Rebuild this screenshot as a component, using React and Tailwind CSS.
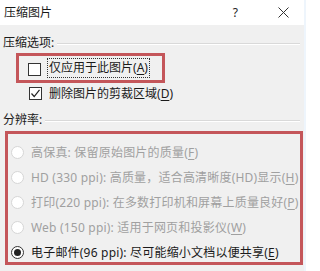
import React from 'react'

const FONT = { fontFamily: '"Noto Sans", "Noto Sans CJK SC", sans-serif' }

function Mn({ k }) {
  // mnemonic letter, underlined like a Windows dialog
  return (
    <span>
      (<span className="underline underline-offset-2">{k}</span>)
    </span>
  )
}

function SectionHeader({ label }) {
  return (
    <div className="flex items-center h-[13px] pl-[3px] pr-[4px] gap-[3px]">
      <span className="text-[12px] leading-none text-[#1a1a1a] whitespace-nowrap">{label}</span>
      <div className="flex-1 h-[2px] border-t border-[#d9d9d9] border-b border-b-white mt-[3px]" />
    </div>
  )
}

function Radio({ checked, disabled }) {
  return (
    <span
      className={`flex items-center justify-center w-[13px] h-[13px] rounded-full border bg-white shrink-0 ${
        disabled ? 'border-[#d6d6d6]' : 'border-[#333]'
      }`}
    >
      {checked && <span className="w-[7px] h-[7px] rounded-full bg-[#222]" />}
    </span>
  )
}

const options = [
  { text: '高保真: 保留原始图片的质量', k: 'F', disabled: true },
  { text: 'HD (330 ppi): 高质量，适合高清晰度(HD)显示', k: 'H', disabled: true },
  { text: '打印(220 ppi): 在多数打印机和屏幕上质量良好', k: 'P', disabled: true },
  { text: 'Web (150 ppi): 适用于网页和投影仪', k: 'W', disabled: true },
  { text: '电子邮件(96 ppi): 尽可能缩小文档以便共享', k: 'E', checked: true },
]

export default function App() {
  return (
    <div className="w-[306px] h-[271px] bg-[#f0f0f0] overflow-hidden border-r-2 border-[#eef5fc]" style={FONT}>
      {/* title bar */}
      <div className="h-[25px] bg-white flex items-center pl-[4px]">
        <span className="text-[12px] text-[#1a1a1a] leading-none">压缩图片</span>
        <span className="ml-auto mr-[40px] text-[12px] leading-none text-[#222]">?</span>
        <svg width="11" height="11" viewBox="0 0 11 11" className="mr-[15px]">
          <path d="M0.5 0.5 L10.5 10.5 M10.5 0.5 L0.5 10.5" stroke="#333" strokeWidth="1" />
        </svg>
      </div>

      <div className="pt-[11px]">
        <SectionHeader label="压缩选项:" />

        <div className="ml-[16px] mt-[4px] w-[149px] h-[30px] border-[3px] border-[#c4565a] flex items-center pl-[9px]">
          <span className="w-[13px] h-[13px] border border-[#333] bg-white shrink-0 mt-[2px]" />
          <span className="ml-[6px] h-[20px] flex items-center px-[1px] border border-dotted border-[#333] text-[12px] text-[#1a1a1a] whitespace-nowrap">
            仅应用于此图片<Mn k="A" />
          </span>
        </div>

        <div className="mt-[4px] h-[13px] flex items-center pl-[29px]">
          <span className="w-[13px] h-[13px] border border-[#333] bg-white shrink-0 flex items-center justify-center">
            <svg width="11" height="11" viewBox="0 0 11 11">
              <path d="M1.5 5.5 L4.2 8.5 L9.5 1.8" fill="none" stroke="#222" strokeWidth="1.2" />
            </svg>
          </span>
          <span className="ml-[7px] text-[12px] text-[#1a1a1a] whitespace-nowrap">
            删除图片的剪裁区域<Mn k="D" />
          </span>
        </div>

        <div className="mt-[13px]">
          <SectionHeader label="分辨率:" />
        </div>

        <div className="ml-[5px] mt-[5px] w-[298px] h-[134px] border-[3px] border-[#c4565a] pt-[6px] pl-[3px]">
          {options.map((o) => (
            <div key={o.k} className="h-[25px] flex items-center">
              <Radio checked={o.checked} disabled={o.disabled} />
              <span
                className={`ml-[7px] text-[12px] tracking-[0.2px] whitespace-nowrap ${
                  o.disabled ? 'text-[#a0a0a0]' : 'text-[#1a1a1a]'
                }`}
              >
                {o.text}
                <Mn k={o.k} />
              </span>
            </div>
          ))}
        </div>
      </div>
    </div>
  )
}
